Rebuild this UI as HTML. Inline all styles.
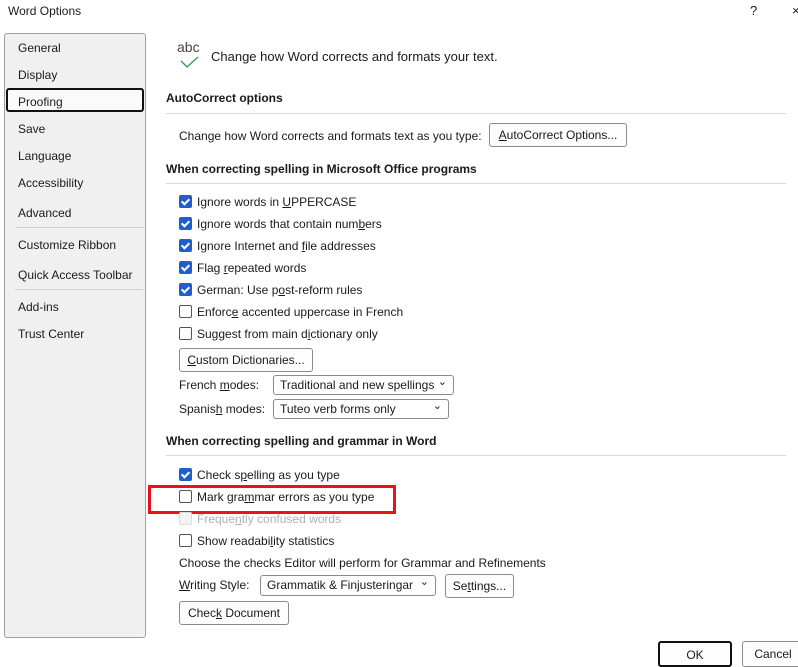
<!DOCTYPE html>
<html><head><style>
body{margin:0;width:798px;height:662px;background:#fff;font-family:"Liberation Sans",sans-serif;font-size:12px;color:#1a1a1a;position:relative;overflow:hidden}
.a{position:absolute;white-space:nowrap}
.side{position:absolute;left:4px;top:33px;width:140px;height:603px;background:#f0f0f0;border:1px solid #a0a0a0;border-radius:3px}
.side .a{left:13px}
.sep{position:absolute;left:10px;width:128px;height:1px;background:#d0d0d0}
.h{font-weight:bold}
.hl{position:absolute;height:1px;background:#d8d8d8}
.cb{position:absolute;left:179px;width:11px;height:11px;border:1px solid #555;border-radius:2px;background:#fff}
.cb.on{background:#1f5fcc;border-color:#1f5fcc}
.cb.on::after{content:"";position:absolute;left:3px;top:1px;width:3px;height:6px;border:solid #fff;border-width:0 2px 2px 0;transform:rotate(45deg)}
.btn{position:absolute;border:1px solid #8a8a8a;border-radius:3px;background:#fdfdfd;text-align:center;box-sizing:border-box}
.sel{position:absolute;border:1px solid #8a8a8a;border-radius:3px;background:#fff;box-sizing:border-box;padding-left:6px}
.sel::after{content:"⌄";position:absolute;right:6px;top:-3px;font-size:11px}
u{text-decoration:underline}
</style></head><body>
<div class="a" style="left:8px;top:4px">Word Options</div>
<div class="a" style="left:750px;top:3px;font-size:13px">?</div>
<div class="a" style="left:792px;top:3px;font-size:13px">×</div>

<div class="side">
<div class="a" style="top:7px">General</div>
<div class="a" style="top:34px">Display</div>
<div style="position:absolute;left:0;top:54px;width:138px;height:24px;border:2px solid #111;border-radius:3px;background:#fafafa;box-sizing:border-box;left:1px"></div>
<div class="a" style="top:61px">Proofing</div>
<div class="a" style="top:88px">Save</div>
<div class="a" style="top:115px">Language</div>
<div class="a" style="top:142px">Accessibility</div>
<div class="a" style="top:172px">Advanced</div>
<div class="sep" style="top:193px"></div>
<div class="a" style="top:204px">Customize Ribbon</div>
<div class="a" style="top:234px">Quick Access Toolbar</div>
<div class="sep" style="top:255px"></div>
<div class="a" style="top:266px">Add-ins</div>
<div class="a" style="top:293px">Trust Center</div>
</div>

<div class="a" style="left:177px;top:39px;font-size:14px;color:#444">abc</div>
<svg class="a" style="left:180px;top:56px" width="20" height="12"><path d="M1 5 L7 11 L18 1" stroke="#2e9d4e" stroke-width="1.3" fill="none"/></svg>
<div class="a" style="left:211px;top:49px;font-size:13px">Change how Word corrects and formats your text.</div>

<div class="a h" style="left:166px;top:91px">AutoCorrect options</div>
<div class="hl" style="left:166px;top:113px;width:620px"></div>
<div class="a" style="left:179px;top:129px">Change how Word corrects and formats text as you type:</div>
<div class="btn" style="left:489px;top:123px;width:138px;height:24px;line-height:22px"><u>A</u>utoCorrect Options...</div>

<div class="a h" style="left:166px;top:162px">When correcting spelling in Microsoft Office programs</div>
<div class="hl" style="left:166px;top:183px;width:620px"></div>

<div class="cb on" style="top:195px"></div><div class="a" style="left:197px;top:195px">Ignore words in <u>U</u>PPERCASE</div>
<div class="cb on" style="top:217px"></div><div class="a" style="left:197px;top:217px">Ignore words that contain num<u>b</u>ers</div>
<div class="cb on" style="top:239px"></div><div class="a" style="left:197px;top:239px">Ignore Internet and <u>f</u>ile addresses</div>
<div class="cb on" style="top:261px"></div><div class="a" style="left:197px;top:261px">Flag <u>r</u>epeated words</div>
<div class="cb on" style="top:283px"></div><div class="a" style="left:197px;top:283px">German: Use p<u>o</u>st-reform rules</div>
<div class="cb" style="top:305px"></div><div class="a" style="left:197px;top:305px">Enforc<u>e</u> accented uppercase in French</div>
<div class="cb" style="top:327px"></div><div class="a" style="left:197px;top:327px">Suggest from main d<u>i</u>ctionary only</div>
<div class="btn" style="left:179px;top:348px;width:134px;height:24px;line-height:22px"><u>C</u>ustom Dictionaries...</div>
<div class="a" style="left:179px;top:378px">French <u>m</u>odes:</div>
<div class="sel" style="left:273px;top:375px;width:181px;height:20px;line-height:18px">Traditional and new spellings</div>
<div class="a" style="left:179px;top:402px">Spanis<u>h</u> modes:</div>
<div class="sel" style="left:273px;top:399px;width:176px;height:20px;line-height:18px">Tuteo verb forms only</div>

<div class="a h" style="left:166px;top:434px">When correcting spelling and grammar in Word</div>
<div class="hl" style="left:166px;top:455px;width:620px"></div>

<div class="cb on" style="top:468px"></div><div class="a" style="left:197px;top:468px">Check s<u>p</u>elling as you type</div>
<div style="position:absolute;left:148px;top:485px;width:248px;height:29px;border:3px solid #e8121f;box-sizing:border-box"></div>
<div class="cb" style="top:490px"></div><div class="a" style="left:197px;top:490px">Mark gra<u>m</u>mar errors as you type</div>
<div class="cb" style="top:512px;border-color:#ddd;background:#f3f3f3"></div><div class="a" style="left:197px;top:512px;color:#b0b0b0">Freque<u>n</u>tly confused words</div>
<div class="cb" style="top:534px"></div><div class="a" style="left:197px;top:534px">Show readabi<u>l</u>ity statistics</div>
<div class="a" style="left:179px;top:556px">Choose the checks Editor will perform for Grammar and Refinements</div>
<div class="a" style="left:179px;top:578px"><u>W</u>riting Style:</div>
<div class="sel" style="left:260px;top:575px;width:176px;height:21px;line-height:19px">Grammatik &amp; Finjusteringar</div>
<div class="btn" style="left:445px;top:574px;width:69px;height:24px;line-height:22px">Se<u>t</u>tings...</div>
<div class="btn" style="left:179px;top:601px;width:110px;height:24px;line-height:22px">Chec<u>k</u> Document</div>

<div class="btn" style="left:658px;top:641px;width:74px;height:26px;line-height:24px;border:2px solid #111">OK</div>
<div class="btn" style="left:742px;top:641px;width:70px;height:26px;line-height:24px;padding-right:8px">Cancel</div>
</body></html>
